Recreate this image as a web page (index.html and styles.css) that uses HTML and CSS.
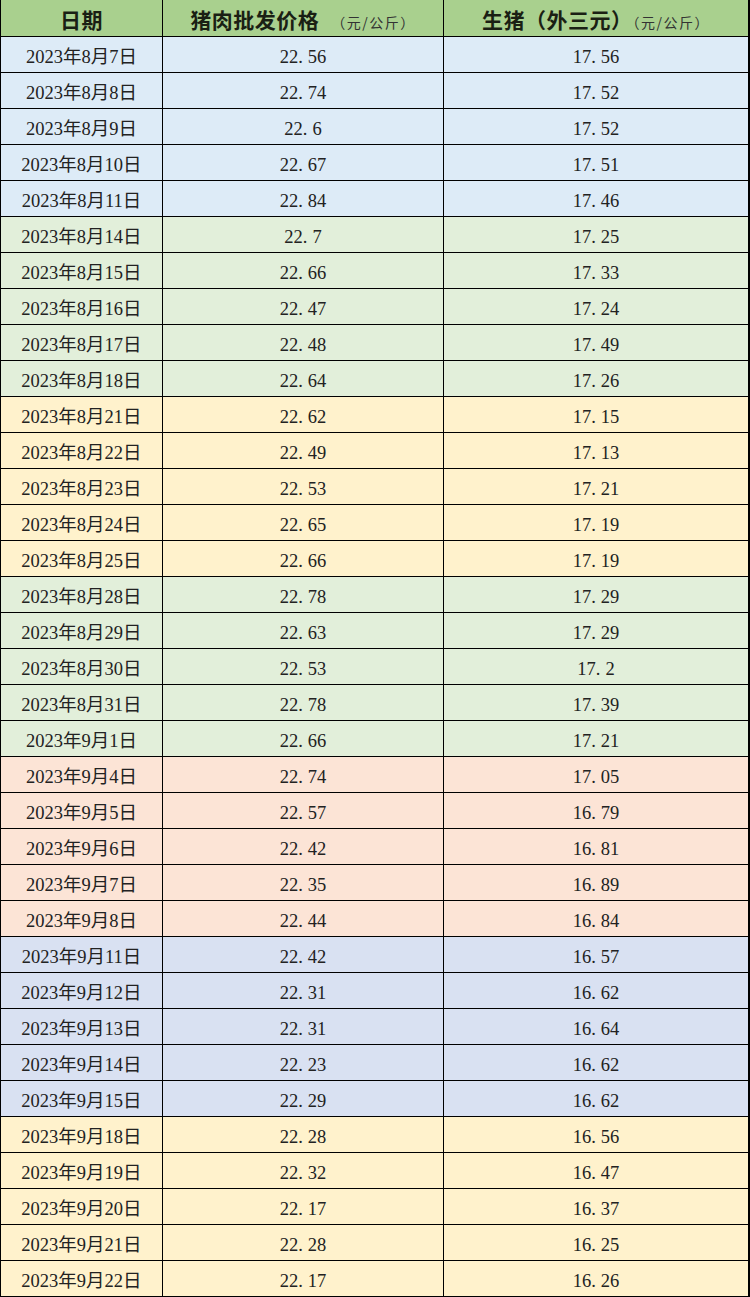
FILE: index.html
```html
<!DOCTYPE html>
<html lang="zh-CN">
<head>
<meta charset="utf-8">
<title>猪肉价格</title>
<link rel="stylesheet" href="styles.css">
</head>
<body>
<div class="table">
  <div class="row head"><div>日期</div><div>猪肉批发价格<small class="gap">（元/公斤）</small></div><div>生猪（外三元）<small>（元/公斤）</small></div></div>
  <div class="row blue"><div>2023年8月7日</div><div>22<span class="pt">.</span>56</div><div>17<span class="pt">.</span>56</div></div>
  <div class="row blue"><div>2023年8月8日</div><div>22<span class="pt">.</span>74</div><div>17<span class="pt">.</span>52</div></div>
  <div class="row blue"><div>2023年8月9日</div><div>22<span class="pt">.</span>6</div><div>17<span class="pt">.</span>52</div></div>
  <div class="row blue"><div>2023年8月10日</div><div>22<span class="pt">.</span>67</div><div>17<span class="pt">.</span>51</div></div>
  <div class="row blue"><div>2023年8月11日</div><div>22<span class="pt">.</span>84</div><div>17<span class="pt">.</span>46</div></div>
  <div class="row green"><div>2023年8月14日</div><div>22<span class="pt">.</span>7</div><div>17<span class="pt">.</span>25</div></div>
  <div class="row green"><div>2023年8月15日</div><div>22<span class="pt">.</span>66</div><div>17<span class="pt">.</span>33</div></div>
  <div class="row green"><div>2023年8月16日</div><div>22<span class="pt">.</span>47</div><div>17<span class="pt">.</span>24</div></div>
  <div class="row green"><div>2023年8月17日</div><div>22<span class="pt">.</span>48</div><div>17<span class="pt">.</span>49</div></div>
  <div class="row green"><div>2023年8月18日</div><div>22<span class="pt">.</span>64</div><div>17<span class="pt">.</span>26</div></div>
  <div class="row yellow"><div>2023年8月21日</div><div>22<span class="pt">.</span>62</div><div>17<span class="pt">.</span>15</div></div>
  <div class="row yellow"><div>2023年8月22日</div><div>22<span class="pt">.</span>49</div><div>17<span class="pt">.</span>13</div></div>
  <div class="row yellow"><div>2023年8月23日</div><div>22<span class="pt">.</span>53</div><div>17<span class="pt">.</span>21</div></div>
  <div class="row yellow"><div>2023年8月24日</div><div>22<span class="pt">.</span>65</div><div>17<span class="pt">.</span>19</div></div>
  <div class="row yellow"><div>2023年8月25日</div><div>22<span class="pt">.</span>66</div><div>17<span class="pt">.</span>19</div></div>
  <div class="row green"><div>2023年8月28日</div><div>22<span class="pt">.</span>78</div><div>17<span class="pt">.</span>29</div></div>
  <div class="row green"><div>2023年8月29日</div><div>22<span class="pt">.</span>63</div><div>17<span class="pt">.</span>29</div></div>
  <div class="row green"><div>2023年8月30日</div><div>22<span class="pt">.</span>53</div><div>17<span class="pt">.</span>2</div></div>
  <div class="row green"><div>2023年8月31日</div><div>22<span class="pt">.</span>78</div><div>17<span class="pt">.</span>39</div></div>
  <div class="row green"><div>2023年9月1日</div><div>22<span class="pt">.</span>66</div><div>17<span class="pt">.</span>21</div></div>
  <div class="row pink"><div>2023年9月4日</div><div>22<span class="pt">.</span>74</div><div>17<span class="pt">.</span>05</div></div>
  <div class="row pink"><div>2023年9月5日</div><div>22<span class="pt">.</span>57</div><div>16<span class="pt">.</span>79</div></div>
  <div class="row pink"><div>2023年9月6日</div><div>22<span class="pt">.</span>42</div><div>16<span class="pt">.</span>81</div></div>
  <div class="row pink"><div>2023年9月7日</div><div>22<span class="pt">.</span>35</div><div>16<span class="pt">.</span>89</div></div>
  <div class="row pink"><div>2023年9月8日</div><div>22<span class="pt">.</span>44</div><div>16<span class="pt">.</span>84</div></div>
  <div class="row lav"><div>2023年9月11日</div><div>22<span class="pt">.</span>42</div><div>16<span class="pt">.</span>57</div></div>
  <div class="row lav"><div>2023年9月12日</div><div>22<span class="pt">.</span>31</div><div>16<span class="pt">.</span>62</div></div>
  <div class="row lav"><div>2023年9月13日</div><div>22<span class="pt">.</span>31</div><div>16<span class="pt">.</span>64</div></div>
  <div class="row lav"><div>2023年9月14日</div><div>22<span class="pt">.</span>23</div><div>16<span class="pt">.</span>62</div></div>
  <div class="row lav"><div>2023年9月15日</div><div>22<span class="pt">.</span>29</div><div>16<span class="pt">.</span>62</div></div>
  <div class="row yellow"><div>2023年9月18日</div><div>22<span class="pt">.</span>28</div><div>16<span class="pt">.</span>56</div></div>
  <div class="row yellow"><div>2023年9月19日</div><div>22<span class="pt">.</span>32</div><div>16<span class="pt">.</span>47</div></div>
  <div class="row yellow"><div>2023年9月20日</div><div>22<span class="pt">.</span>17</div><div>16<span class="pt">.</span>37</div></div>
  <div class="row yellow"><div>2023年9月21日</div><div>22<span class="pt">.</span>28</div><div>16<span class="pt">.</span>25</div></div>
  <div class="row yellow"><div>2023年9月22日</div><div>22<span class="pt">.</span>17</div><div>16<span class="pt">.</span>26</div></div>
</div>
</body>
</html>
```
FILE: styles.css
```css
html, body {
  margin: 0;
  padding: 0;
  background: #ffffff;
}

.table {
  width: 750px;
  box-sizing: border-box;
  display: grid;
  grid-template-columns: 161px 280px 304px;
  grid-template-rows: 36px;
  grid-auto-rows: 35px;
  gap: 1px;
  padding: 0 2px 1px 1px;
  background: #000;
  font-family: "Liberation Serif", "Noto Sans CJK SC", serif;
  font-size: 18.5px;
  color: #222;
}

.row {
  display: contents;
}

.row > div {
  display: flex;
  align-items: center;
  justify-content: center;
  white-space: nowrap;
  line-height: 1;
  padding-top: 5px;
  box-sizing: border-box;
}

.pt {
  padding-right: 5px;
}

.head > div {
  display: block;
  text-align: center;
  line-height: 36px;
  padding-top: 1px;
  background: #a9d08e;
  font-family: "Noto Sans CJK SC", sans-serif;
  font-weight: 700;
  font-size: 21px;
  letter-spacing: 0.5px;
  color: #1a1f14;
}

.head small {
  font-weight: 400;
  font-size: 14px;
  letter-spacing: 1.5px;
  color: #333;
}

.head small.gap {
  margin-left: 12px;
}

.blue > div { background: #ddebf7; }
.green > div { background: #e2efda; }
.yellow > div { background: #fff2cc; }
.pink > div { background: #fce4d6; }
.lav > div { background: #d9e1f2; }
```
